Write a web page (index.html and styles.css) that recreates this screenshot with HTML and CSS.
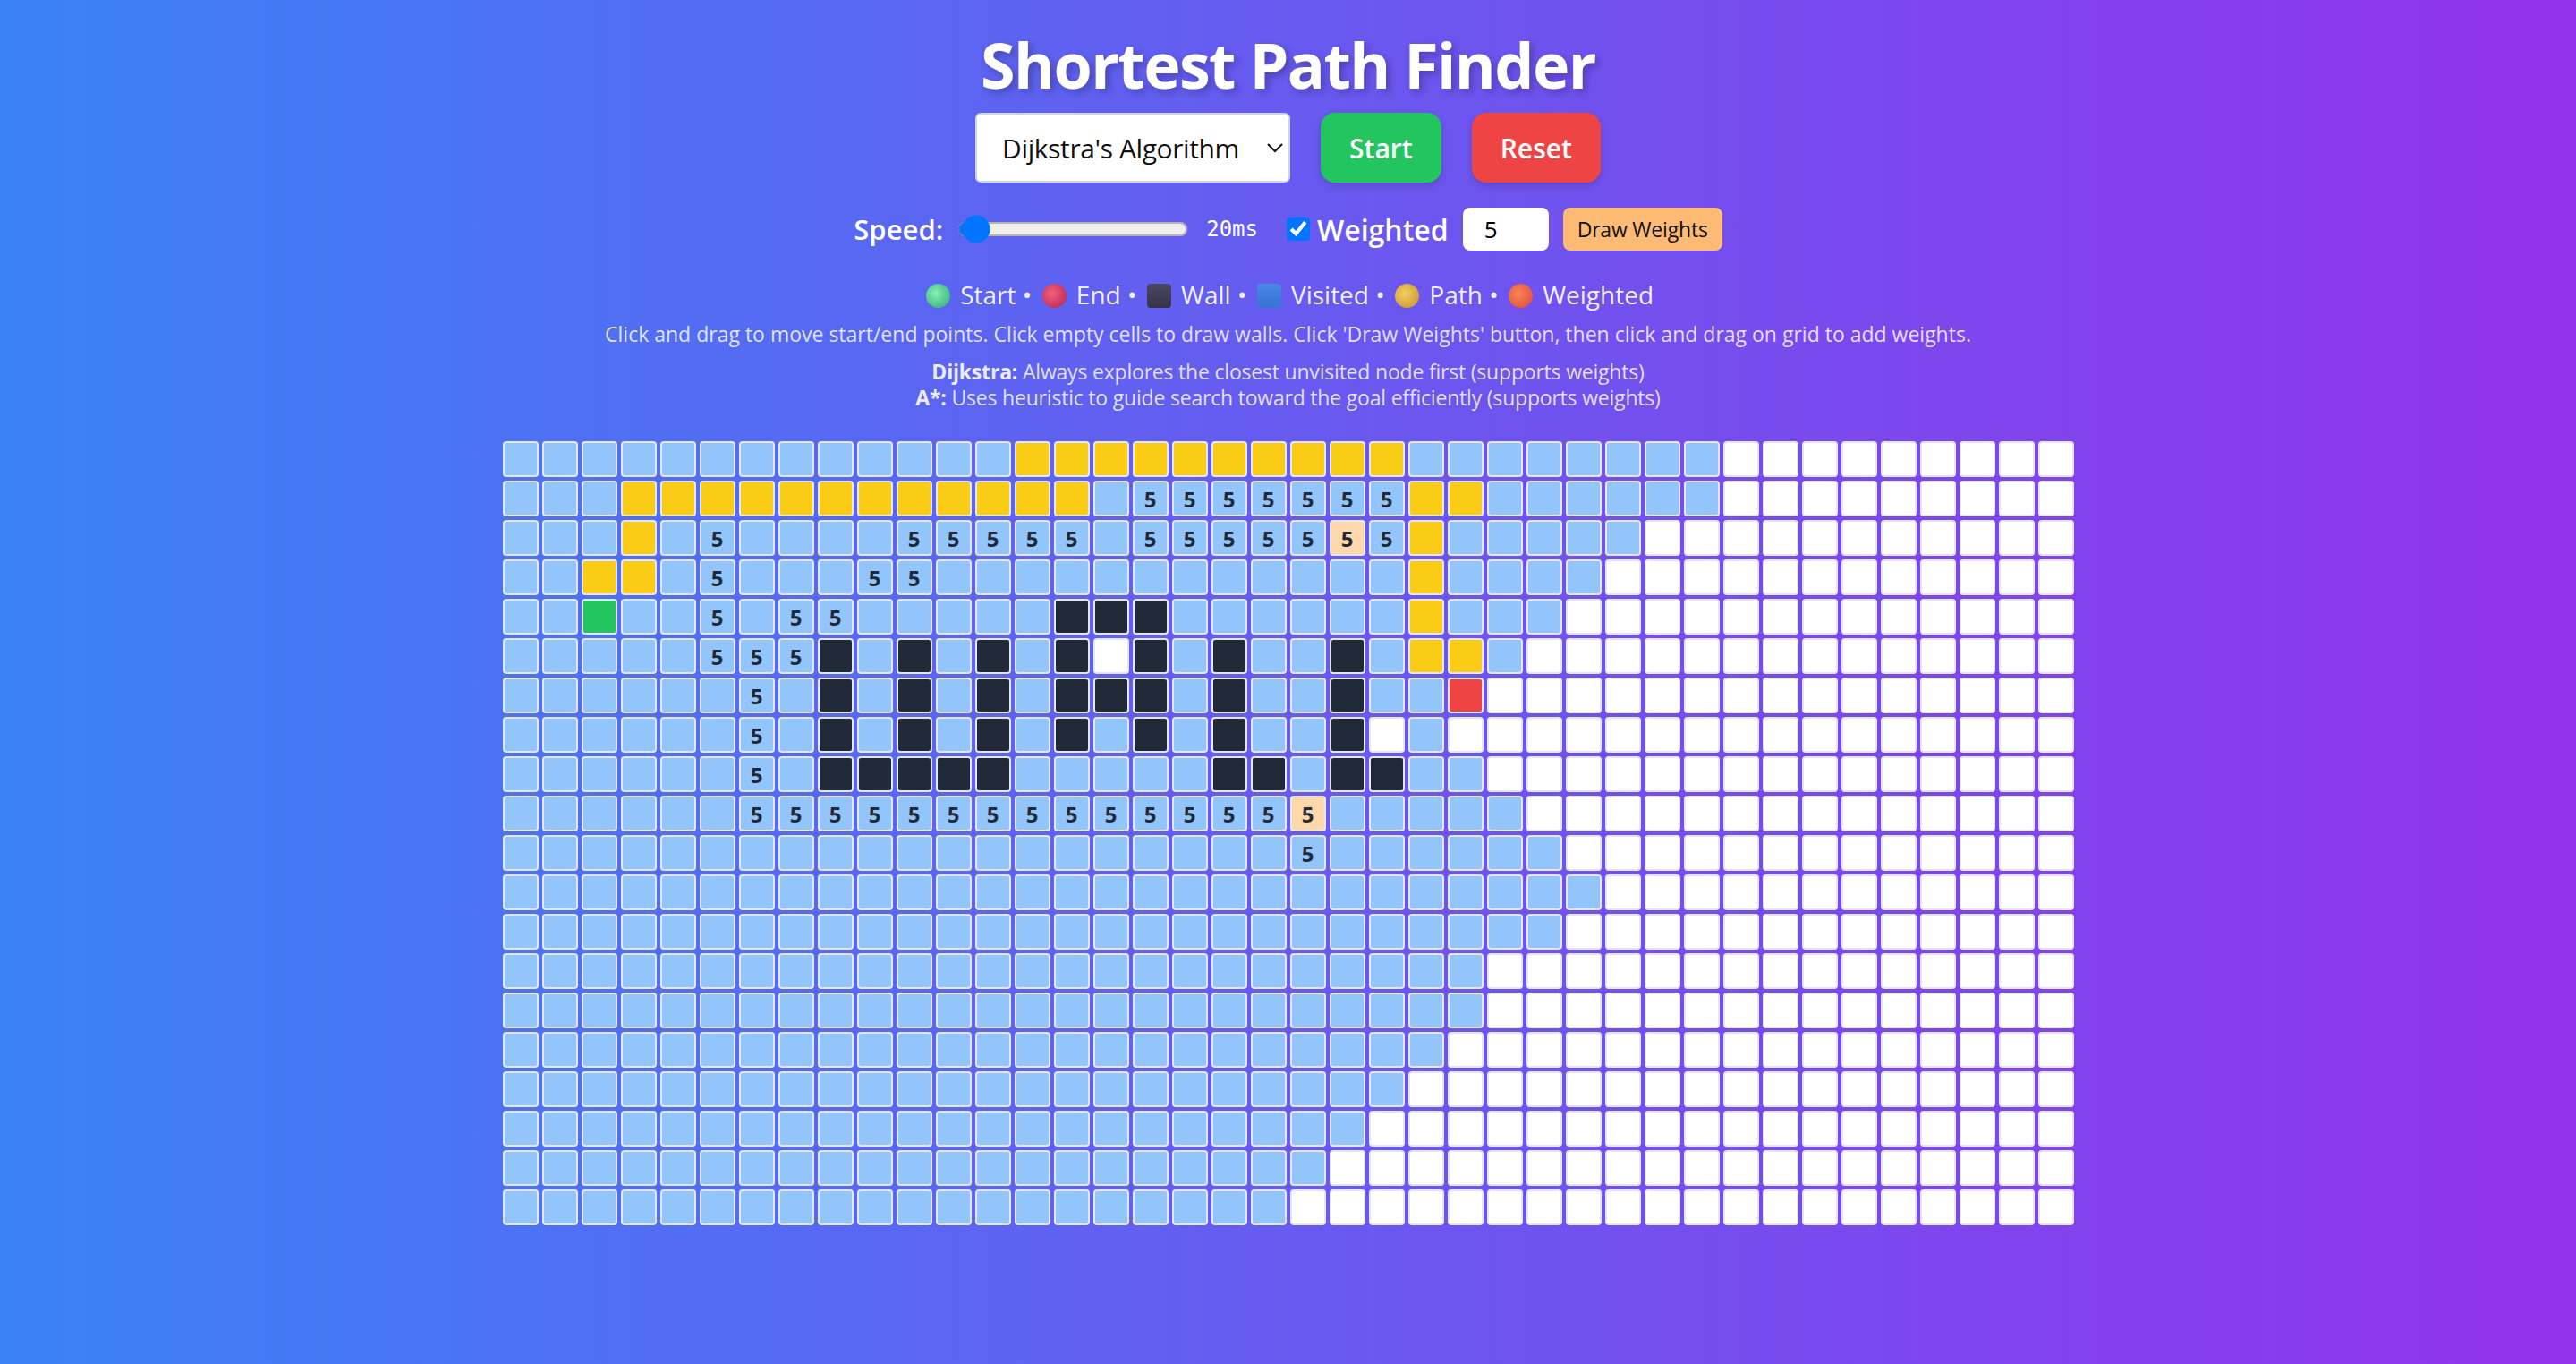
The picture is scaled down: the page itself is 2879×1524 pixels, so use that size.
FILE: index.html
```html
<!DOCTYPE html>
<html lang="en">
<head>
<meta charset="utf-8">
<title>Shortest Path Finder</title>
<link rel="stylesheet" href="styles.css">
</head>
<body>
<div class="app">
  <h1 class="title">Shortest Path Finder</h1>
  <div class="controls">
    <select class="algo-select">
      <option>Dijkstra's Algorithm</option>
      <option>A* Algorithm</option>
    </select>
    <button class="btn btn-start">Start</button>
    <button class="btn btn-reset">Reset</button>
  </div>
  <div class="options">
    <span class="speed-label">Speed:</span>
    <input class="speed-range" type="range" min="10" max="500" value="20">
    <span class="speed-value">20ms</span>
    <label class="weighted-label"><input type="checkbox" checked> Weighted</label>
    <input class="weight-input" type="number" value="5">
    <button class="btn-draw">Draw Weights</button>
  </div>
  <div class="legend">
    <span class="sym dot dot-green"></span> Start • <span class="sym dot dot-red"></span> End • <span class="sym sq sq-wall"></span> Wall • <span class="sym sq sq-visited"></span> Visited • <span class="sym dot dot-yellow"></span> Path • <span class="sym dot dot-orange"></span> Weighted
  </div>
  <p class="hint">Click and drag to move start/end points. Click empty cells to draw walls. Click 'Draw Weights' button, then click and drag on grid to add weights.</p>
  <div class="algo-info">
    <p><strong>Dijkstra:</strong> Always explores the closest unvisited node first (supports weights)</p>
    <p><strong>A*:</strong> Uses heuristic to guide search toward the goal efficiently (supports weights)</p>
  </div>
  <div class="grid" id="grid"></div>
</div>
<script src="script.js"></script>
</body>
</html>
```

FILE: styles.css
```css
html, body {
  margin: 0;
  padding: 0;
}

body {
  min-height: 100vh;
  background: linear-gradient(to right, #3b82f6, #9333ea);
  font-family: "Open Sans", "Noto Sans", sans-serif;
}

.app {
  zoom: 2;
  display: flex;
  flex-direction: column;
  align-items: center;
  padding-top: 16px;
  color: #fff;
}

.title {
  margin: 0 0 7px;
  font-size: 35px;
  line-height: 40px;
  letter-spacing: -0.8px;
  font-weight: 700;
  color: #fff;
  text-shadow: 2px 2px 4px rgba(0, 0, 0, 0.25);
}

.controls {
  display: flex;
  align-items: center;
  gap: 17px;
}

.algo-select {
  width: 176px;
  height: 39px;
  padding: 0 6px 0 10px;
  font-family: inherit;
  font-size: 15px;
  letter-spacing: -0.2px;
  color: #111;
  background: #fff;
  border: 1px solid #d1d5db;
  border-radius: 3px;
}

.btn {
  height: 39px;
  padding: 0 16px;
  font-family: inherit;
  font-size: 15px;
  font-weight: 600;
  color: #fff;
  border: none;
  border-radius: 8px;
  box-shadow: 0 2px 4px rgba(0, 0, 0, 0.15);
}

.btn-start {
  background: #22c55e;
}

.btn-reset {
  background: #ef4444;
}

.options {
  display: flex;
  align-items: center;
  margin-top: 12px;
  height: 28px;
}

.speed-label {
  font-size: 15.5px;
  font-weight: 600;
  margin-right: 6px;
}

.speed-range {
  margin: 0 2px;
}

.speed-value {
  font-family: "DejaVu Sans Mono", "Liberation Mono", monospace;
  font-size: 12px;
  margin-left: 8px;
}

.weighted-label {
  display: flex;
  align-items: center;
  margin-left: 16px;
  font-size: 16px;
  font-weight: 600;
}

.weighted-label input {
  margin: 0 4px 0 0;
}

.weight-input {
  box-sizing: border-box;
  width: 48px;
  height: 24px;
  margin-left: 8px;
  padding: 0 0 0 12px;
  font-family: inherit;
  font-size: 13px;
  border: none;
  border-radius: 4px;
  background: #fff;
}

.btn-draw {
  height: 24px;
  margin-left: 8px;
  padding: 0 8px;
  font-family: inherit;
  font-size: 11.5px;
  letter-spacing: -0.1px;
  color: #111;
  background: #fdba74;
  border: none;
  border-radius: 4px;
}

.legend {
  margin-top: 12.5px;
  font-size: 14px;
  line-height: 20px;
  color: rgba(255, 255, 255, 0.92);
  white-space: nowrap;
}

.sym {
  display: inline-block;
  width: 13.5px;
  height: 13.5px;
  margin: 0 2px;
  vertical-align: -2px;
}

.dot {
  border-radius: 50%;
}

.dot-green {
  background: radial-gradient(circle at 40% 40%, #86efb5, #3fb985 75%);
}

.dot-red {
  background: radial-gradient(circle at 40% 40%, #f0607e, #c72f58 75%);
}

.dot-yellow {
  background: radial-gradient(circle at 40% 40%, #f3cf63, #cf9d3a 75%);
}

.dot-orange {
  background: radial-gradient(circle at 40% 40%, #f7865a, #e4563c 75%);
}

.sq {
  border-radius: 2px;
}

.sq-wall {
  background: linear-gradient(#4a4762, #35334a);
}

.sq-visited {
  background: linear-gradient(#4a88e6, #3573d4);
}

.hint {
  margin: 4px 0 0;
  font-size: 11.5px;
  line-height: 16px;
  color: rgba(255, 255, 255, 0.82);
}

.algo-info {
  margin-top: 6px;
  text-align: center;
  font-size: 11.5px;
  letter-spacing: -0.1px;
  line-height: 14.5px;
  color: rgba(255, 255, 255, 0.82);
}

.algo-info p {
  margin: 0;
}

.algo-info strong {
  color: rgba(255, 255, 255, 0.9);
}

.grid {
  display: grid;
  grid-template-columns: repeat(40, 20px);
  grid-auto-rows: 20px;
  gap: 2px;
  margin-top: 17px;
}

.cell {
  box-sizing: border-box;
  width: 20px;
  height: 20px;
  border: 1px solid #e5e7eb;
  border-radius: 2px;
  background: #fff;
  display: flex;
  align-items: center;
  justify-content: center;
  font-size: 12px;
  font-weight: 700;
  color: #1f2937;
}

.cell-visited {
  background: #93c5fd;
}

.cell-path {
  background: #facc15;
}

.cell-wall {
  background: #1f2937;
}

.cell-start {
  background: #22c55e;
}

.cell-end {
  background: #ef4444;
}

.cell-weight {
  background: #93c5fd;
}

.cell-weight-path {
  background: #fed7aa;
}
```

FILE: script.js
```js
const rows = [
  "vvvvvvvvvvvvvppppppppppvvvvvvvv.........",
  "vvvppppppppppppv5555555ppvvvvvv..........",
  "vvvpv5vvvv55555v55555o5pvvvvv...........",
  "vvppv5vvv55vvvvvvvvvvvvpvvvv............",
  "vvSvv5v55vvvvvwwwvvvvvvpvvv.............",
  "vvvvv555wvwvwvw.wvwvvwvppv..............",
  "vvvvvv5vwvwvwvwwwvwvvwvvE...............",
  "vvvvvv5vwvwvwvwvwvwvvw.v................",
  "vvvvvv5vwwwwwvvvvvwwvwwvv...............",
  "vvvvvv55555555555555ovvvvv..............",
  "vvvvvvvvvvvvvvvvvvvv5vvvvvv.............",
  "vvvvvvvvvvvvvvvvvvvvvvvvvvvv............",
  "vvvvvvvvvvvvvvvvvvvvvvvvvvv.............",
  "vvvvvvvvvvvvvvvvvvvvvvvvv...............",
  "vvvvvvvvvvvvvvvvvvvvvvvvv...............",
  "vvvvvvvvvvvvvvvvvvvvvvvv................",
  "vvvvvvvvvvvvvvvvvvvvvvv.................",
  "vvvvvvvvvvvvvvvvvvvvvv..................",
  "vvvvvvvvvvvvvvvvvvvvv...................",
  "vvvvvvvvvvvvvvvvvvvv...................."
];

const classes = {
  ".": "",
  "v": "cell-visited",
  "p": "cell-path",
  "w": "cell-wall",
  "S": "cell-start",
  "E": "cell-end",
  "5": "cell-weight",
  "o": "cell-weight-path"
};

const grid = document.getElementById("grid");
rows.forEach(function (row) {
  for (let i = 0; i < 40; i++) {
    const ch = row[i] || ".";
    const cell = document.createElement("div");
    cell.className = "cell " + classes[ch];
    if (ch === "5" || ch === "o") {
      cell.textContent = "5";
    }
    grid.appendChild(cell);
  }
});
```
